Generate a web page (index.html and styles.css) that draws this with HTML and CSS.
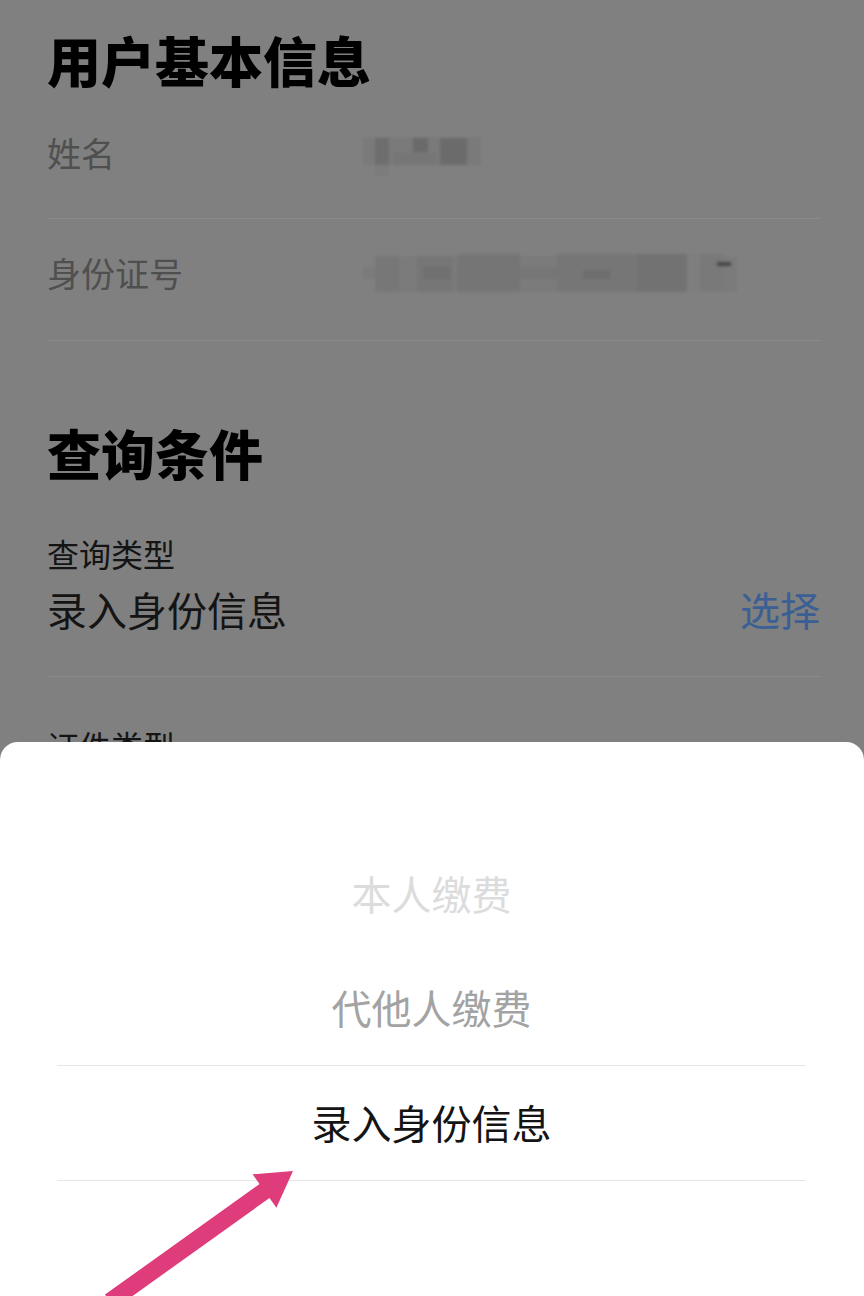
FILE: index.html
```html
<!DOCTYPE html>
<html lang="zh-CN">
<head>
<meta charset="utf-8">
<link rel="stylesheet" href="styles.css">
</head>
<body>
<div class="page">
  <h1 class="heading h1">用户基本信息</h1>
  <div class="row row-name">
    <span class="label">姓名</span>
    <svg class="mosaic" width="130" height="50" viewBox="0 0 130 50">
      <rect x="0" y="9" width="118" height="28" fill="#7a7a7a"/>
      <rect x="12" y="37" width="14" height="11" fill="#7c7c7c"/>
      <rect x="12" y="10" width="14" height="27" fill="#6e6e6e"/>
      <rect x="50" y="10" width="15" height="14" fill="#6a6a6a"/>
      <rect x="77" y="10" width="27" height="27" fill="#6b6b6b"/>
      <rect x="30" y="24" width="44" height="13" fill="#767676"/>
    </svg>
  </div>
  <div class="row row-id">
    <span class="label">身份证号</span>
    <svg class="mosaic" width="380" height="50" viewBox="0 0 380 50">
      <rect x="0" y="19" width="12" height="12" fill="#7b7b7b"/>
      <rect x="12" y="8" width="362" height="36" fill="#7b7b7b"/>
      <rect x="12" y="8" width="25" height="36" fill="#777"/>
      <rect x="54" y="8" width="36" height="36" fill="#767676"/>
      <rect x="60" y="19" width="27" height="12" fill="#707070"/>
      <rect x="94" y="6" width="63" height="38" fill="#757575"/>
      <rect x="157" y="19" width="37" height="12" fill="#767676"/>
      <rect x="194" y="6" width="80" height="38" fill="#767676"/>
      <rect x="220" y="22" width="27" height="9" fill="#6e6e6e"/>
      <rect x="274" y="6" width="50" height="38" fill="#727272"/>
      <rect x="324" y="6" width="13" height="38" fill="#7e7e7e"/>
      <rect x="337" y="6" width="23" height="38" fill="#797979"/>
      <rect x="354" y="14" width="14" height="4" fill="#474747"/>
    </svg>
  </div>

  <h1 class="heading h2">查询条件</h1>
  <div class="field">
    <div class="field-label">查询类型</div>
    <div class="field-value">
      <span>录入身份信息</span>
      <span class="link">选择</span>
    </div>
  </div>
  <div class="field field-next">
    <div class="field-label">证件类型</div>
  </div>
</div>

<div class="sheet">
  <div class="picker">
    <div class="opt opt-far">本人缴费</div>
    <div class="opt opt-near">代他人缴费</div>
    <div class="opt opt-selected">录入身份信息</div>
  </div>
</div>

<svg class="arrow" width="864" height="1296" viewBox="0 0 864 1296">
  <polygon fill="#df3c7c" points="293,1171 276.4,1207.7 269.5,1198 115,1308.6 105,1294.6 259.5,1184 252.6,1174.3"/>
</svg>
</body>
</html>
```

FILE: styles.css
```css
html, body {
  margin: 0;
  padding: 0;
}
body {
  width: 864px;
  height: 1296px;
  overflow: hidden;
  position: relative;
  background: #808080;
  font-family: "Noto Sans CJK SC", sans-serif;
  color: #111;
}
.page {
  padding: 20px 44px 0 47px;
}
.heading {
  margin: 0;
  font-size: 54px;
  font-weight: 900;
  line-height: 80px;
  height: 80px;
  color: #000;
}
.h2 {
  margin-top: 72px;
}
.row {
  display: flex;
  align-items: center;
  height: 40px;
  border-bottom: 1px solid #8b8b8b;
}
.row-name {
  padding: 33px 0 45px;
}
.row-id {
  padding: 34px 0 47px;
}
.label {
  width: 316px;
  font-size: 34px;
  line-height: 40px;
  color: #4f4f4f;
  flex: none;
}
.mosaic {
  display: block;
  flex: none;
  filter: blur(1.5px);
}
.field {
  padding-top: 40px;
  padding-bottom: 43px;
  border-bottom: 1px solid #8b8b8b;
}
.field-label {
  font-size: 32px;
  line-height: 40px;
  color: #141414;
}
.field-value {
  margin-top: 12px;
  display: flex;
  justify-content: space-between;
  font-size: 40px;
  line-height: 48px;
  color: #141414;
}
.link {
  color: #3a5f94;
}
.field-next {
  border-bottom: none;
  padding-top: 48px;
}
.sheet {
  position: absolute;
  left: 0;
  right: 0;
  bottom: 0;
  height: 554px;
  background: #fff;
  border-radius: 18px 18px 0 0;
  box-sizing: border-box;
  padding: 95px 58px 0 57px;
}
.opt {
  height: 114px;
  line-height: 112px;
  text-align: center;
  font-size: 40px;
}
.opt-far {
  color: #dcdcdc;
}
.opt-near {
  color: #a3a3a3;
  border-bottom: 1px solid #e6e6e6;
}
.opt-selected {
  color: #141414;
  border-bottom: 1px solid #e6e6e6;
}
.arrow {
  position: absolute;
  left: 0;
  top: 0;
  pointer-events: none;
}
```
